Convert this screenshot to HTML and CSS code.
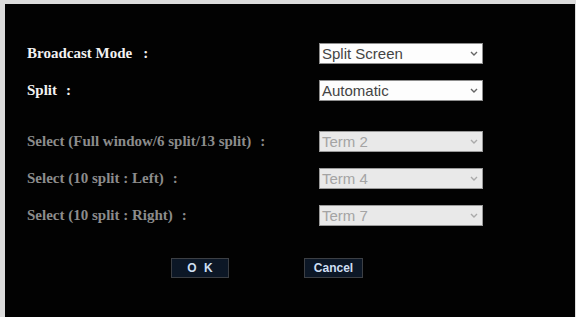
FILE: index.html
```html
<!DOCTYPE html>
<html>
<head>
<meta charset="utf-8">
<link rel="stylesheet" href="styles.css">
</head>
<body>
<div class="panel">
  <div class="group">
    <div class="label">Broadcast Mode<span class="colon c-wide">:</span></div>
    <div class="select"><span>Split Screen</span><svg class="chev" width="8" height="5" viewBox="0 0 8 5"><path d="M1 1 L4 4 L7 1" fill="none" stroke="#666" stroke-width="1.4"/></svg></div>
    <div class="label">Split<span class="colon">:</span></div>
    <div class="select"><span>Automatic</span><svg class="chev" width="8" height="5" viewBox="0 0 8 5"><path d="M1 1 L4 4 L7 1" fill="none" stroke="#666" stroke-width="1.4"/></svg></div>
  </div>
  <div class="group second">
    <div class="label dim">Select (Full window/6 split/13 split)<span class="colon">:</span></div>
    <div class="select disabled"><span>Term 2</span><svg class="chev" width="8" height="5" viewBox="0 0 8 5"><path d="M1 1 L4 4 L7 1" fill="none" stroke="#aaa" stroke-width="1.4"/></svg></div>
    <div class="label dim">Select (10 split : Left)<span class="colon">:</span></div>
    <div class="select disabled"><span>Term 4</span><svg class="chev" width="8" height="5" viewBox="0 0 8 5"><path d="M1 1 L4 4 L7 1" fill="none" stroke="#aaa" stroke-width="1.4"/></svg></div>
    <div class="label dim">Select (10 split : Right)<span class="colon">:</span></div>
    <div class="select disabled"><span>Term 7</span><svg class="chev" width="8" height="5" viewBox="0 0 8 5"><path d="M1 1 L4 4 L7 1" fill="none" stroke="#aaa" stroke-width="1.4"/></svg></div>
  </div>
  <div class="buttons">
    <button class="btn ok">O K</button>
    <button class="btn cancel">Cancel</button>
  </div>
</div>
</body>
</html>
```
FILE: styles.css
```css
html, body {
  margin: 0;
  padding: 0;
  height: 100%;
}
body {
  background: #dcdcdc;
  padding: 4px 1px 0 5px;
  box-sizing: border-box;
}
.panel {
  background: #020202;
  height: 100%;
  box-sizing: border-box;
  padding: 39px 0 0 22px;
}
.group {
  display: grid;
  grid-template-columns: 292px 164px;
  row-gap: 16px;
  align-items: center;
}
.group.second {
  margin-top: 30px;
}
.label {
  font-family: "Liberation Serif", "Times New Roman", serif;
  font-weight: bold;
  font-size: 15px;
  color: #f2f2f2;
  white-space: nowrap;
  line-height: 21px;
}
.label.dim {
  color: #8c8c8c;
}
.colon {
  margin-left: 9px;
}
.colon.c-wide {
  margin-left: 11px;
}
.select {
  height: 21px;
  box-sizing: border-box;
  border: 1px solid #8e8e8e;
  background: #fdfdfd;
  display: flex;
  align-items: center;
  justify-content: space-between;
  padding: 0 4px 0 2px;
  font-family: "Liberation Sans", Arial, sans-serif;
  font-size: 15px;
  color: #444;
}
.select.disabled {
  background: #e9e9e9;
  color: #a4a4a4;
  border-color: #9a9a9a;
}
.chev {
  display: block;
}
.buttons {
  display: flex;
  margin-top: 32px;
  padding-left: 144px;
  gap: 75px;
}
.btn {
  height: 20px;
  box-sizing: border-box;
  background: #0c1726;
  border: 1px solid #3c3f44;
  color: #cfdff3;
  font-family: "Liberation Sans", Arial, sans-serif;
  font-weight: bold;
  font-size: 12px;
  padding: 0;
  margin: 0;
}
.btn.ok {
  width: 58px;
  letter-spacing: 2px;
  text-indent: 2px;
}
.btn.cancel {
  width: 59px;
}
```
